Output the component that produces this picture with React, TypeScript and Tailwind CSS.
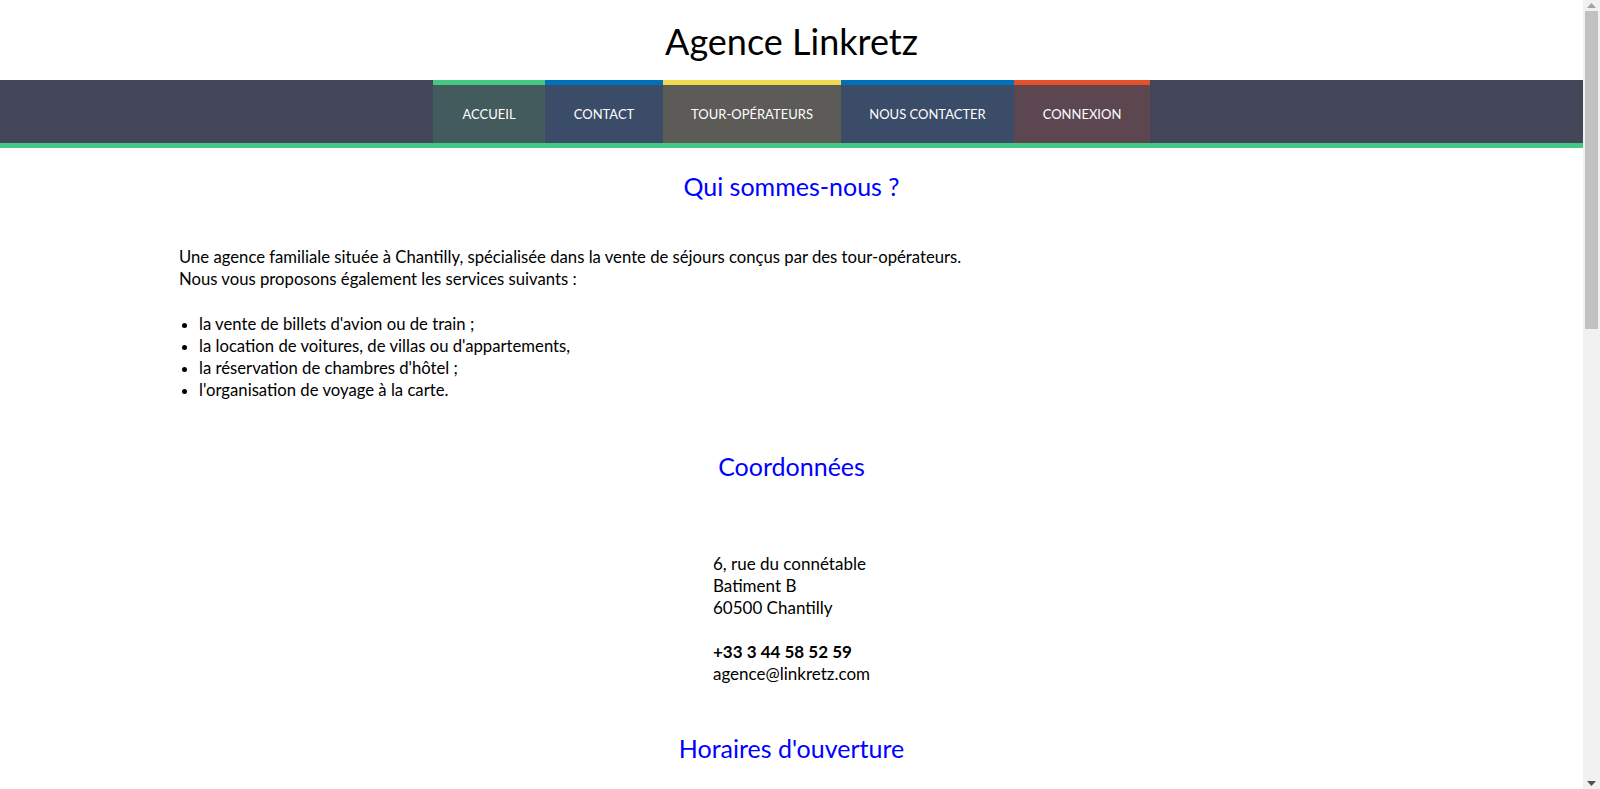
const navItems = [
  { label: 'Accueil', width: 'w-[112px]', bg: 'bg-[#435b5d]', top: 'border-[#44c985]' },
  { label: 'Contact', width: 'w-[118px]', bg: 'bg-[#3a4c67]', top: 'border-[#0070b9]' },
  { label: 'Tour-opérateurs', width: 'w-[178px]', bg: 'bg-[#5d5b57]', top: 'border-[#f1d84d]' },
  { label: 'Nous contacter', width: 'w-[173px]', bg: 'bg-[#3a4c67]', top: 'border-[#0070b9]' },
  { label: 'Connexion', width: 'w-[136px]', bg: 'bg-[#5c4751]', top: 'border-[#e3502b]' },
]

const services = [
  "la vente de billets d'avion ou de train ;",
  "la location de voitures, de villas ou d'appartements,",
  "la réservation de chambres d'hôtel ;",
  "l'organisation de voyage à la carte.",
]

const horaires = [
  ['Lundi', '14h00 - 19h00'],
  ['Mardi', '09h30 - 12h30 / 14h00 - 19h00'],
  ['Mercredi', '09h30 - 12h30 / 14h00 - 19h00'],
  ['Jeudi', '09h30 - 12h30 / 14h00 - 19h00'],
  ['Vendredi', '09h30 - 12h30 / 14h00 - 19h00'],
  ['Samedi', '09h30 - 12h30 / 14h00 - 18h00'],
  ['Dimanche', 'Fermé'],
]

function SectionTitle({ children }: { children: React.ReactNode }) {
  return (
    <h2 className="text-center text-[25px] leading-[30px] text-[#0000ff] font-normal">
      {children}
    </h2>
  )
}

// barre de défilement du navigateur, telle qu'elle apparaît sur la capture
function Scrollbar() {
  return (
    <aside className="w-[17px] shrink-0">
      <div className="sticky top-0 h-screen bg-[#f1f1f1] flex flex-col items-center">
        <div className="h-[11px] flex items-center justify-center">
          <svg width="9" height="5" viewBox="0 0 9 5">
            <path d="M0 5 L4.5 0 L9 5 Z" fill="#a3a3a3" />
          </svg>
        </div>
        <div className="w-[13px] h-[318px] bg-[#c1c1c1]" />
        <div className="flex-1" />
        <div className="h-[11px] flex items-center justify-center">
          <svg width="9" height="5" viewBox="0 0 9 5">
            <path d="M0 0 L9 0 L4.5 5 Z" fill="#505050" />
          </svg>
        </div>
      </div>
    </aside>
  )
}

export default function App() {
  return (
    <div className="flex min-h-screen bg-white">
      <div className="w-[1583px] shrink-0 text-black font-['Lato','Noto_Sans',sans-serif] text-[16.7px] leading-[22px]">
        <header className="h-[80px] flex items-center justify-center">
          <h1 className="text-[36px] leading-none font-normal pt-[2px]">Agence Linkretz</h1>
        </header>

        <nav className="bg-[#434659] h-[63px] flex justify-center">
          {navItems.map((item) => (
            <a
              key={item.label}
              href="#"
              className={`${item.width} ${item.bg} ${item.top} border-t-[5px] flex items-center justify-center text-white uppercase text-[13px]`}
            >
              {item.label}
            </a>
          ))}
        </nav>
        <div className="h-[5px] bg-[#44c985]" />

        <section className="pt-[23px]">
          <SectionTitle>Qui sommes-nous ?</SectionTitle>
          <div className="pl-[179px] pt-[45px]">
            <p>
              Une agence familiale située à Chantilly, spécialisée dans la vente de séjours conçus par des tour-opérateurs.
              <br />
              Nous vous proposons également les services suivants :
            </p>
            <ul className="mt-[23px] list-disc pl-[20px]">
              {services.map((s) => (
                <li key={s}>{s}</li>
              ))}
            </ul>
          </div>
        </section>

        <section className="pt-[50px]">
          <SectionTitle>Coordonnées</SectionTitle>
          <div className="flex justify-center pt-[72px]">
            <address className="not-italic w-fit text-[17px] leading-[22px]">
              6, rue du connétable
              <br />
              Batiment B
              <br />
              60500 Chantilly
              <br />
              <br />
              <strong className="font-bold">+33 3 44 58 52 59</strong>
              <br />
              agence@linkretz.com
            </address>
          </div>
        </section>

        <section className="pt-[48px] pb-[80px]">
          <SectionTitle>Horaires d'ouverture</SectionTitle>
          <div className="flex justify-center pt-[60px]">
            <table className="border-collapse">
              <tbody>
                {horaires.map(([jour, h]) => (
                  <tr key={jour}>
                    <td className="pr-[30px] py-[4px] font-bold">{jour}</td>
                    <td className="py-[4px]">{h}</td>
                  </tr>
                ))}
              </tbody>
            </table>
          </div>
          <div className="pt-[60px]">
            <SectionTitle>Plan d'accès</SectionTitle>
          </div>
          <div className="mx-auto mt-[40px] w-[600px] h-[400px] bg-[#e5e3df]" />
        </section>
      </div>
      <Scrollbar />
    </div>
  )
}
